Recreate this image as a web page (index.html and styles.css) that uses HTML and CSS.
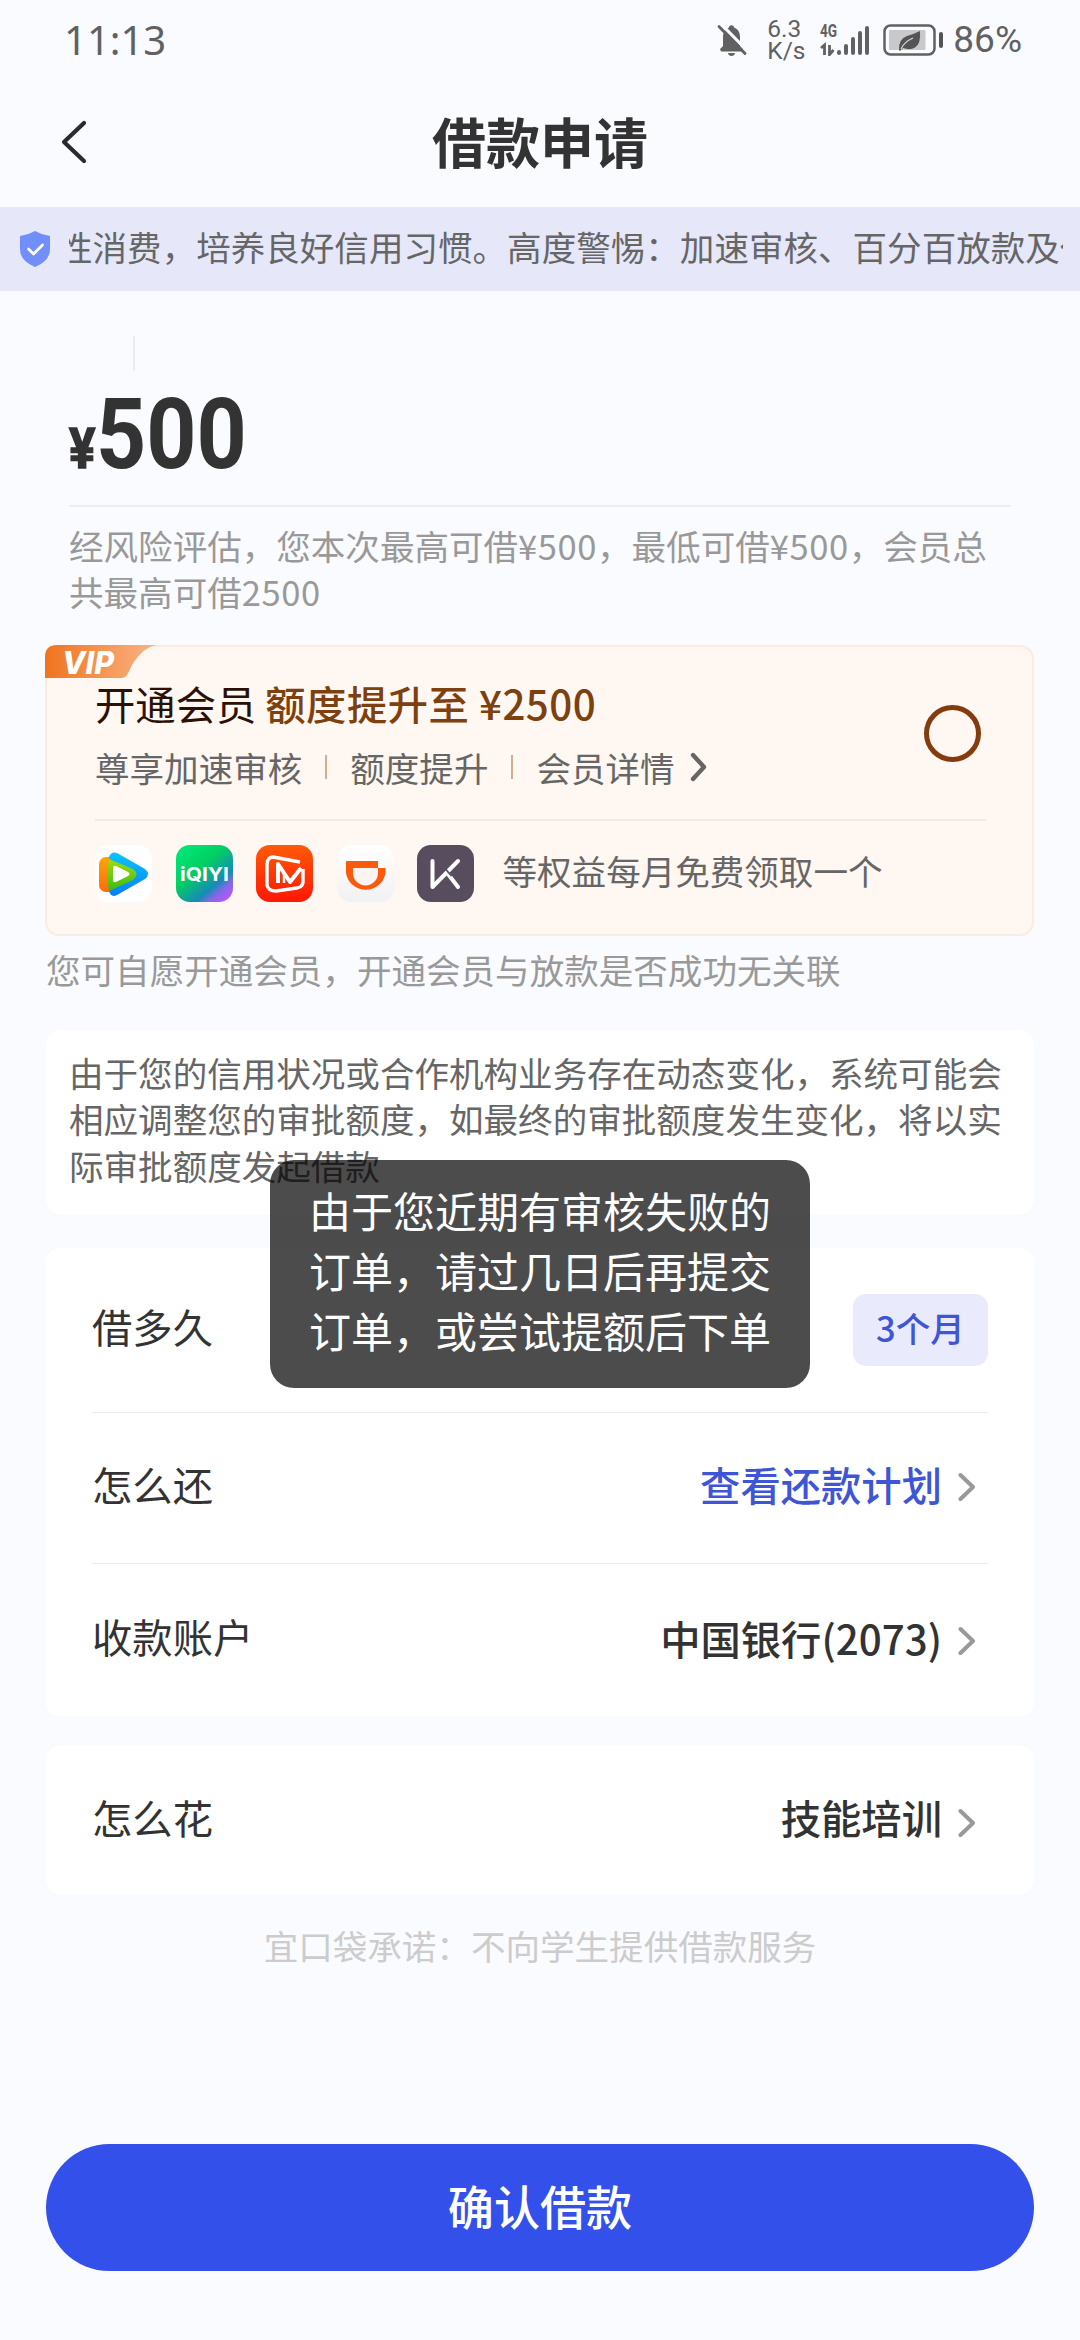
FILE: index.html
```html
<!DOCTYPE html>
<html lang="zh-CN">
<head>
<meta charset="utf-8">
<title>借款申请</title>
<link rel="stylesheet" href="styles.css">
</head>
<body>
<div class="screen">
  <header class="status">
    <span class="clock">11:13</span>
    <div class="indicators">
      <svg class="bell" viewBox="0 0 30 32"><path d="M4 27.500h22V25L23 22V13C23 7.500 20 4.500 17 3.500c0-3-5-3-5 0C8 5 6 8.500 6 13v9l-3 3z"/><path d="M11 29h7q-.5 3-3.500 3t-3.500-3z"/><path d="M4.500 .5 31 27.500" stroke="#fafbff" stroke-width="3.200"/><path d="M2 2.500 28 29.500" stroke="#616161" stroke-width="2.800" stroke-linecap="round"/></svg>
      <div class="speed"><span>6.3</span><span>K/s</span></div>
      <div class="network"><span class="gen">4G</span>
        <svg class="signal" viewBox="0 0 50 32"><path d="M1 24 4.500 21V31M9.500 21v9.500l4-4.500" fill="none" stroke="#616161" stroke-width="2.800"/><g stroke="#616161" stroke-width="4" stroke-linecap="round"><path d="M19 28v1M26 22v7M33 15v14M40 9v20M47 4v25"/></g></svg>
      </div>
      <svg class="battery" viewBox="0 0 60 32"><rect x="1.500" y="1.500" width="50" height="29" rx="6" fill="none" stroke="#616161" stroke-width="2.500"/><rect x="6" y="6" width="36.500" height="20" rx="1" fill="#c9c9cb"/><rect x="56" y="8" width="4" height="16" rx="2"/><path d="M16 26q-.5-11 8-14 7-2 13-5 1 13-5 16.500-5 3-12 .5l-3 3z"/><path d="M18 25q3-7 12-11" fill="none" stroke="#d5d5d7" stroke-width="1.300"/></svg>
      <span class="percent">86%</span>
    </div>
  </header>
  <nav class="nav">
    <svg class="back" viewBox="0 0 28 46"><path d="M24 4 4 23l20 19" fill="none" stroke="#2b2b2d" stroke-width="4.200" stroke-linecap="round" stroke-linejoin="round"/></svg>
    <h1>借款申请</h1>
  </nav>
  <div class="notice">
    <svg class="shield" viewBox="0 0 30 36"><path d="M15 0Q22 4 30 5V18Q30 30 15 36 0 30 0 18V5Q8 4 15 0z" fill="#728efb"/><path d="M8.500 18l5 5 9-9" fill="none" stroke="#fff" stroke-width="2.800" stroke-linecap="round" stroke-linejoin="round"/></svg>
    <div class="marquee"><span>性消费，培养良好信用习惯。高度警惕：加速审核、百分百放款及代</span></div>
  </div>
  <main>
    <section class="amount">
      <i class="tick"></i>
      <div class="sum"><span class="yen">¥</span><span class="number">500</span></div>
      <p>经风险评估，您本次最高可借<span class="num">¥500</span>，最低可借<span class="num">¥500</span>，会员总共最高可借<span class="num">2500</span></p>
    </section>
    <section class="vip">
      <svg class="ribbon" viewBox="0 0 112 33"><defs><linearGradient id="tag"><stop offset="0" stop-color="#ef741f"/><stop offset="1" stop-color="#fbb486"/></linearGradient></defs><path d="M0 33V12Q0 0 12 0H112Q98 2 87 20C83 28 82 33 76 33z" fill="url(#tag)"/><text x="17" y="28.500" textLength="52" lengthAdjust="spacingAndGlyphs">VIP</text></svg>
      <div class="offer">
        <div>
          <h2>开通会员 <b>额度提升至 ¥2500</b></h2>
          <div class="perks"><span>尊享加速审核</span><i></i><span>额度提升</span><i></i><span>会员详情</span><svg viewBox="0 0 18 30"><path d="M3 3 14 15 3 27" fill="none" stroke="#666" stroke-width="4.400" stroke-linecap="round" stroke-linejoin="round"/></svg></div>
        </div>
        <span class="radio"></span>
      </div>
      <div class="brands">
        <svg viewBox="0 0 57 57"><defs><linearGradient id="or" x2="0" y2="1"><stop stop-color="#ffa30a"/><stop offset="1" stop-color="#ff6b08"/></linearGradient><linearGradient id="bl" x2="0" y2="1"><stop stop-color="#0ac5ff"/><stop offset="1" stop-color="#087df7"/></linearGradient><linearGradient id="gr" x2="0" y2="1"><stop stop-color="#a4dc0b"/><stop offset="1" stop-color="#37bd14"/></linearGradient></defs><rect width="57" height="57" rx="14" fill="#fff"/><rect x="4" y="12" width="22" height="35" rx="7" fill="url(#or)"/><path d="M14 12Q16 6 22 8L50 24Q56 29 50 34L22 50Q16 53 14 46z" fill="url(#bl)"/><path d="M14 14 38 24Q45 29 38 35L14 46Q11 29 14 14z" fill="url(#gr)"/><path d="M18 23q0-3 3-2l12 6q3 2 0 4l-12 6q-3 1-3-2z" fill="#fff"/></svg>
        <svg viewBox="0 0 57 57"><defs><linearGradient id="iq" x1=".15" y1=".05" x2=".95" y2="1"><stop offset="0" stop-color="#00e577"/><stop offset=".35" stop-color="#02cf61"/><stop offset=".68" stop-color="#168bb7"/><stop offset=".8" stop-color="#8468e8"/><stop offset="1" stop-color="#cc50ff"/></linearGradient></defs><rect width="57" height="57" rx="14" fill="url(#iq)"/><text class="iqiyi" x="4" y="36" textLength="49" lengthAdjust="spacingAndGlyphs">iQIYI</text></svg>
        <svg viewBox="0 0 57 57"><defs><linearGradient id="mg" x2="0" y2="1"><stop stop-color="#ff5a08"/><stop offset="1" stop-color="#ff1702"/></linearGradient></defs><rect width="57" height="57" rx="14" fill="url(#mg)"/><g fill="none" stroke="#fff" stroke-linejoin="round"><path d="M44 17 17 12Q11 12 11 20V40Q12 46 20 46L41 43Q48 42 47 34V24" stroke-width="3.400"/><path d="M22 38V19l12 18L45 23" stroke-width="4"/><path d="M28 28v10" stroke-width="2.500"/></g></svg>
        <svg viewBox="0 0 57 57"><defs><linearGradient id="dd" x2="0" y2="1"><stop stop-color="#fff"/><stop offset="1" stop-color="#f1f1f3"/></linearGradient></defs><rect width="57" height="57" rx="14" fill="url(#dd)"/><path d="M9 16H41V23H48.500V28A20 20 0 0 1 9 28z" fill="#fb5a0c"/><path d="M16 23H41V28A12.500 12.500 0 0 1 16 28z" fill="#fbf5f2"/></svg>
        <svg viewBox="0 0 57 57"><rect width="57" height="57" rx="14" fill="#584d5e"/><path d="M15.500 16V42L41 16M31 29 41 42" fill="none" stroke="#fff" stroke-width="4" stroke-linecap="round" stroke-linejoin="round"/><path d="M28.500 24l6 7" stroke="#584d5e" stroke-width="1.800"/></svg>
        <span>等权益每月免费领取一个</span>
      </div>
    </section>
    <p class="voluntary">您可自愿开通会员，开通会员与放款是否成功无关联</p>
    <section class="card info">由于您的信用状况或合作机构业务存在动态变化，系统可能会相应调整您的审批额度，如最终的审批额度发生变化，将以实际审批额度发起借款</section>
    <section class="card details">
      <div class="row term"><span>借多久</span><span class="badge">3个月</span></div>
      <div class="row plan"><span>怎么还</span><span class="value link">查看还款计划</span><svg class="chev" viewBox="0 0 18 30"><path d="M2.500 3 15 15 2.500 27" fill="none" stroke="#999" stroke-width="4" stroke-linecap="round" stroke-linejoin="round"/></svg></div>
      <div class="row account"><span>收款账户</span><span class="value">中国银行(2073)</span><svg class="chev" viewBox="0 0 18 30"><path d="M2.500 3 15 15 2.500 27" fill="none" stroke="#999" stroke-width="4" stroke-linecap="round" stroke-linejoin="round"/></svg></div>
    </section>
    <section class="card usage">
      <div class="row"><span>怎么花</span><span class="value">技能培训</span><svg class="chev" viewBox="0 0 18 30"><path d="M2.500 3 15 15 2.500 27" fill="none" stroke="#999" stroke-width="4" stroke-linecap="round" stroke-linejoin="round"/></svg></div>
    </section>
    <p class="promise">宜口袋承诺：不向学生提供借款服务</p>
    <button class="confirm">确认借款</button>
  </main>
  <div class="toast">由于您近期有审核失败的订单，请过几日后再提交订单，或尝试提额后下单</div>
</div>
</body>
</html>
```
FILE: styles.css
```css
* { box-sizing: border-box; margin: 0; padding: 0; }
body { background: #fafbff; font-family: "Noto Sans CJK SC", sans-serif; color: #333; }
svg { display: block; flex: none; }
.screen { position: relative; width: 1080px; height: 2340px; overflow: hidden; display: flex; flex-direction: column; font-size: 34.56px; line-height: 46.4px; }

.status { height: 80px; flex: none; padding: 0 58px 0 64px; display: flex; justify-content: space-between; align-items: center; font-family: Roboto, sans-serif; color: #616161; }
.clock { font-family: "Noto Sans", sans-serif; font-size: 40px; }
.indicators { display: flex; align-items: center; height: 76px; }
.bell { width: 30px; height: 32px; fill: #616161; margin-right: 20px; }
.speed { display: flex; flex-direction: column; font-size: 24.500px; line-height: 22px; width: 33px; margin-right: 20px; }
.network { position: relative; width: 50px; height: 32px; margin-right: 13px; }
.signal { width: 50px; height: 32px; }
.gen { position: absolute; left: 0; top: -3px; font-size: 19px; line-height: 20px; font-weight: 700; transform: scaleX(.72); transform-origin: left; }
.battery { width: 60px; height: 32px; fill: #545454; margin-right: 10px; }
.percent { font-size: 37px; }

.nav { height: 127px; flex: none; display: grid; grid-template-columns: 120px 1fr 120px; align-items: center; }
.back { width: 28px; height: 46px; margin: -3px 0 0 60px; }
h1 { font-size: 54px; line-height: 80px; padding-bottom: 6px; text-align: center; font-weight: 700; }

.notice { height: 84px; flex: none; background: #e6e8fa; display: flex; align-items: center; padding: 0 17px 0 20px; color: #666; }
.shield { width: 30px; height: 36px; margin-right: 19px; }
.marquee { flex: 1; overflow: hidden; white-space: nowrap; padding-bottom: 6px; }
.marquee span { margin-left: -11px; }

main { padding: 45px 46px 0; display: flex; flex-direction: column; }
.amount { padding: 0 23px; height: 309px; color: #999; }
.tick { display: block; width: 2px; height: 35px; margin-left: 64px; background: #eaebef; }
.sum { height: 136px; border-bottom: 2px solid #ededf0; color: #333; font-family: Roboto, sans-serif; font-weight: 700; display: flex; align-items: baseline; line-height: 126px; }
.yen { font-size: 56px; width: 27px; transform: scaleX(.88); transform-origin: left; -webkit-text-stroke: 1.500px #333; }
.number { font-size: 99px; transform: scaleX(.885); transform-origin: left; }
.amount p { margin-top: 15px; width: 925px; }
.num { letter-spacing: .55px; }

.vip { position: relative; height: 291px; margin: 0 0 0 -1px; border: 2px solid #fcebdf; border-radius: 14px; background: #fff7f1; padding: 31px 46px 0 48px; }
.ribbon { position: absolute; left: -2px; top: -2px; width: 112px; height: 33px; }
.ribbon text { font: italic 800 31px Inter, sans-serif; fill: #fff; }
.offer { height: 143px; border-bottom: 2px solid #f2e9e4; display: flex; justify-content: space-between; }
h2 { font-size: 40.320px; line-height: 50px; font-weight: 400; color: #2b1006; }
h2 b { font-weight: 500; color: #7d400f; letter-spacing: .5px; }
.perks { display: flex; align-items: center; margin-top: 16px; color: #666; }
.perks i { width: 2px; height: 24px; background: #cfae91; margin: 0 23px; }
.perks svg { width: 18px; height: 30px; margin-left: 15px; }
.radio { width: 57px; height: 57px; border: 5px solid #843b0e; border-radius: 50%; margin: 27px 5px 0 0; }
.brands { display: flex; align-items: center; gap: 23.500px; margin-top: 24px; color: #666; }
.brands svg { width: 57px; height: 57px; }
.brands span { margin: -7px 0 0 5px; }
.iqiyi { font: 700 19px Inter, sans-serif; fill: #fff; }

.voluntary { color: #999; margin-top: 10px; height: 84px; }
.card { background: #fff; border-radius: 14px; }
.info { height: 184px; padding: 19px 23px; color: #666; }
.details { margin-top: 34px; height: 468px; padding: 0 46px; }
.row { display: flex; align-items: center; font-size: 40.320px; }
.row > span { padding-bottom: 7px; }
.row > span:first-child { flex: 1; }
.term { height: 165px; border-bottom: 1px solid #ebebec; }
.plan { height: 151px; border-bottom: 1px solid #ebebec; }
.account { height: 152px; }
.row > .badge { width: 135px; height: 72px; border-radius: 13px; background: #e9ebfd; color: #3e55d6; font-size: 34.560px; line-height: 67px; padding: 0; font-weight: 500; text-align: center; }
.value { font-weight: 500; margin-right: 16px; }
.account .value { padding-bottom: 4px; }
.link { color: #3e55d6; }
.chev { width: 18px; height: 30px; margin-right: 12px; }
.plan .chev { margin-top: -3px; }
.account .chev { margin-top: 2px; }
.usage .chev { margin-top: 6px; }
.usage { margin-top: 30px; height: 148px; padding: 0 46px; }
.usage .row { height: 148px; }
.usage .row > span { padding-bottom: 5px; }
.promise { text-align: center; color: #ccc; margin-top: 28px; }
.confirm { margin-top: 176px; height: 127px; border: 0; border-radius: 64px; background: #3450ea; color: #fff; font: 500 46.080px "Noto Sans CJK SC", sans-serif; padding-bottom: 6px; }

.toast { position: absolute; left: 270px; top: 1160px; width: 540px; height: 228px; border-radius: 24px; background: rgba(0, 0, 0, .7); color: #fff; font-size: 42px; line-height: 60px; padding: 20px 39px; }
```
